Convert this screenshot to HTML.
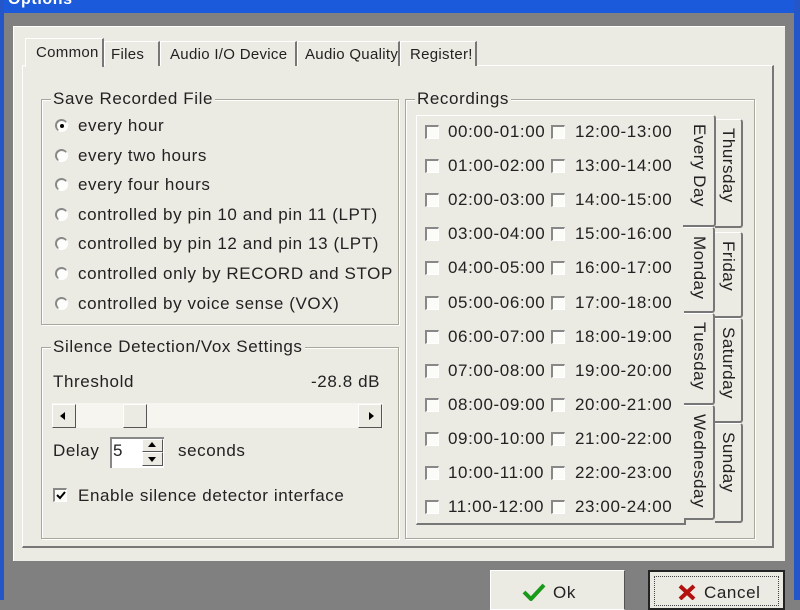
<!DOCTYPE html>
<html><head><style>
*{margin:0;padding:0;box-sizing:border-box}
body{width:800px;height:600px;overflow:hidden;background:#808080;font-family:"Liberation Sans",Arial,sans-serif;font-size:17px;letter-spacing:0.6px;color:#222;position:relative}
.a{position:absolute}
.t{position:absolute;white-space:nowrap;line-height:18px}
.grp{position:absolute;border:1px solid #a9a79c;box-shadow:1px 1px 0 #fff inset,1px 1px 0 #fff}
.lg{position:absolute;background:#ecebe3;padding:0 2px;top:-10px;left:9px;line-height:18px;white-space:nowrap}
.rad{position:absolute;width:13px;height:13px;border-radius:50%;border-top:2px solid #888;border-left:2px solid #888;border-right:1px solid #fff;border-bottom:1px solid #fff;background:#fdfdfb}
.cb{position:absolute;width:14px;height:14px;border-top:2px solid #888;border-left:2px solid #888;border-right:1px solid #fff;border-bottom:1px solid #fff;background:#fbfbf8}
.tab{position:absolute;border:1px solid #fff;border-right:2px solid #777;border-bottom:none;background:#ecebe3;padding:0 4px;line-height:26px;white-space:nowrap;font-size:15px;letter-spacing:0.3px}
.vt{position:absolute;border:1px solid #fff;border-left:none;border-right:2px solid #777;border-bottom:2px solid #777;background:#ecebe3;border-radius:0 3px 3px 0}
.vt span{position:absolute;left:50%;top:8px;transform-origin:0 0;transform:rotate(90deg) translateY(-50%);white-space:nowrap;font-size:17px;letter-spacing:0.5px}
.btn{position:absolute;background:#ecebe3;border:1px solid #fff;border-right-color:#555;}
</style></head><body>
<div class="a" style="left:0;top:0;width:800px;height:13px;background:#1c5adc"></div>
<div class="t" style="left:8px;top:-9px;color:#fff;font-weight:bold;font-size:16px">Options</div>
<div class="a" style="left:0;top:0;width:4px;height:600px;background:#2556c8"></div>
<div class="a" style="left:794px;top:0;width:6px;height:600px;background:#2556c8"></div>
<div class="a" style="left:13px;top:26px;width:772px;height:535px;background:#ecebe3;border-top:1px solid #fff;border-left:1px solid #fff"></div>
<div class="a" style="left:22px;top:65px;width:752px;height:483px;border:1px solid #fff;border-right:2px solid #777;border-bottom:2px solid #777"></div>
<div class="tab" style="left:104px;top:41px;width:56px;height:25px;padding-left:6px">Files</div>
<div class="tab" style="left:160px;top:41px;width:137px;height:25px;padding-left:9px">Audio I/O Device</div>
<div class="tab" style="left:297px;top:41px;width:103px;height:25px;padding-left:7px">Audio Quality</div>
<div class="tab" style="left:400px;top:41px;width:77px;height:25px;padding-left:9px">Register!</div>
<div class="tab" style="left:25px;top:38px;width:79px;height:29px;line-height:28px;padding-left:10px">Common</div>

<div class="grp" style="left:41px;top:99px;width:358px;height:226px"><div class="lg">Save Recorded File</div></div>
<div class="rad" style="left:55px;top:119px"><div class="a" style="left:3px;top:3px;width:4px;height:4px;background:#000;border-radius:50%"></div></div>
<div class="t" style="left:78px;top:117px">every hour</div>
<div class="rad" style="left:55px;top:149px"></div><div class="t" style="left:78px;top:147px">every two hours</div>
<div class="rad" style="left:55px;top:178px"></div><div class="t" style="left:78px;top:176px">every four hours</div>
<div class="rad" style="left:55px;top:208px"></div><div class="t" style="left:78px;top:206px">controlled by pin 10 and pin 11 (LPT)</div>
<div class="rad" style="left:55px;top:237px"></div><div class="t" style="left:78px;top:235px">controlled by pin 12 and pin 13 (LPT)</div>
<div class="rad" style="left:55px;top:267px"></div><div class="t" style="left:78px;top:265px">controlled only by RECORD and STOP</div>
<div class="rad" style="left:55px;top:297px"></div><div class="t" style="left:78px;top:295px">controlled by voice sense (VOX)</div>

<div class="grp" style="left:41px;top:347px;width:358px;height:192px"><div class="lg">Silence Detection/Vox Settings</div></div>
<div class="t" style="left:53px;top:373px">Threshold</div>
<div class="t" style="left:311px;top:373px">-28.8 dB</div>
<div class="a" style="left:52px;top:403px;width:331px;height:25px;background:#f6f5f0"></div>
<div class="btn" style="left:52px;top:404px;width:24px;height:24px;border-bottom:1px solid #555"><div class="a" style="left:7px;top:7px;border:4px solid transparent;border-right:5px solid #000;border-left:none"></div></div>
<div class="btn" style="left:123px;top:404px;width:24px;height:24px;border-bottom:1px solid #555"></div>
<div class="btn" style="left:358px;top:404px;width:24px;height:24px;border-bottom:1px solid #555"><div class="a" style="left:10px;top:7px;border:4px solid transparent;border-left:5px solid #000;border-right:none"></div></div>
<div class="t" style="left:53px;top:442px">Delay</div>
<div class="a" style="left:110px;top:437px;width:54px;height:31px;background:#fff;border-top:2px solid #888;border-left:2px solid #888"></div>
<div class="t" style="left:113px;top:442px">5</div>
<div class="btn" style="left:142px;top:439px;width:21px;height:13px;border-bottom:1px solid #555"><div class="a" style="left:5px;top:2px;border:4px solid transparent;border-bottom:5px solid #000;border-top:none"></div></div>
<div class="btn" style="left:142px;top:452px;width:21px;height:14px;border-bottom:1px solid #555"><div class="a" style="left:5px;top:4px;border:4px solid transparent;border-top:5px solid #000;border-bottom:none"></div></div>
<div class="t" style="left:178px;top:442px">seconds</div>
<div class="cb" style="left:53px;top:488px"><svg class="a" style="left:1px;top:1px" width="10" height="10"><path d="M1 4 L4 7 L9 1" stroke="#000" stroke-width="2" fill="none"/></svg></div>
<div class="t" style="left:78px;top:487px">Enable silence detector interface</div>

<div class="grp" style="left:405px;top:99px;width:350px;height:440px"><div class="lg">Recordings</div></div>
<div class="a" style="left:416px;top:115px;width:270px;height:410px;border:1px solid #fff;border-right:2px solid #777;border-bottom:2px solid #777"></div>
<div id="rows"></div>
<div class="vt" style="left:715px;top:119px;width:28px;height:109px"><span>Thursday</span></div>
<div class="vt" style="left:715px;top:232px;width:28px;height:86px"><span>Friday</span></div>
<div class="vt" style="left:715px;top:318px;width:28px;height:105px"><span>Saturday</span></div>
<div class="vt" style="left:715px;top:423px;width:28px;height:100px"><span>Sunday</span></div>
<div class="vt" style="left:684px;top:227px;width:31px;height:86px"><span>Monday</span></div>
<div class="vt" style="left:684px;top:313px;width:31px;height:92px"><span>Tuesday</span></div>
<div class="vt" style="left:684px;top:405px;width:31px;height:115px"><span>Wednesday</span></div>
<div class="vt" style="left:683px;top:115px;width:33px;height:112px;border-left:none"><span>Every Day</span></div>

<div class="btn" style="left:490px;top:570px;width:135px;height:40px"></div>
<svg class="a" style="left:522px;top:583px" width="24" height="18"><path d="M2 9 L9 16 L22 2" stroke="#1a9a1a" stroke-width="4" fill="none"/></svg>
<div class="t" style="left:553px;top:584px">Ok</div>
<div class="a" style="left:648px;top:570px;width:137px;height:40px;background:#ecebe3;border:2px solid #222"></div>
<div class="a" style="left:654px;top:576px;width:125px;height:30px;border:1px dotted #444"></div>
<svg class="a" style="left:678px;top:584px" width="18" height="16"><path d="M2 2 L16 15 M16 2 L2 15" stroke="#b31010" stroke-width="4"/></svg>
<div class="t" style="left:704px;top:584px">Cancel</div>
<script>
var h='';function f(n){n=(n<10?'0':'')+n;return n+':00';}
for(var i=0;i<12;i++){var y=Math.round(132+i*34.1);
h+='<div class="cb" style="left:425px;top:'+(y-7)+'px"></div><div class="t" style="left:448px;top:'+(y-9)+'px">'+f(i)+'-'+f(i+1)+'</div>';
h+='<div class="cb" style="left:551px;top:'+(y-7)+'px"></div><div class="t" style="left:575px;top:'+(y-9)+'px">'+f(i+12)+'-'+f(i+13)+'</div>';}
document.getElementById('rows').innerHTML=h;
</script>
</body></html>
